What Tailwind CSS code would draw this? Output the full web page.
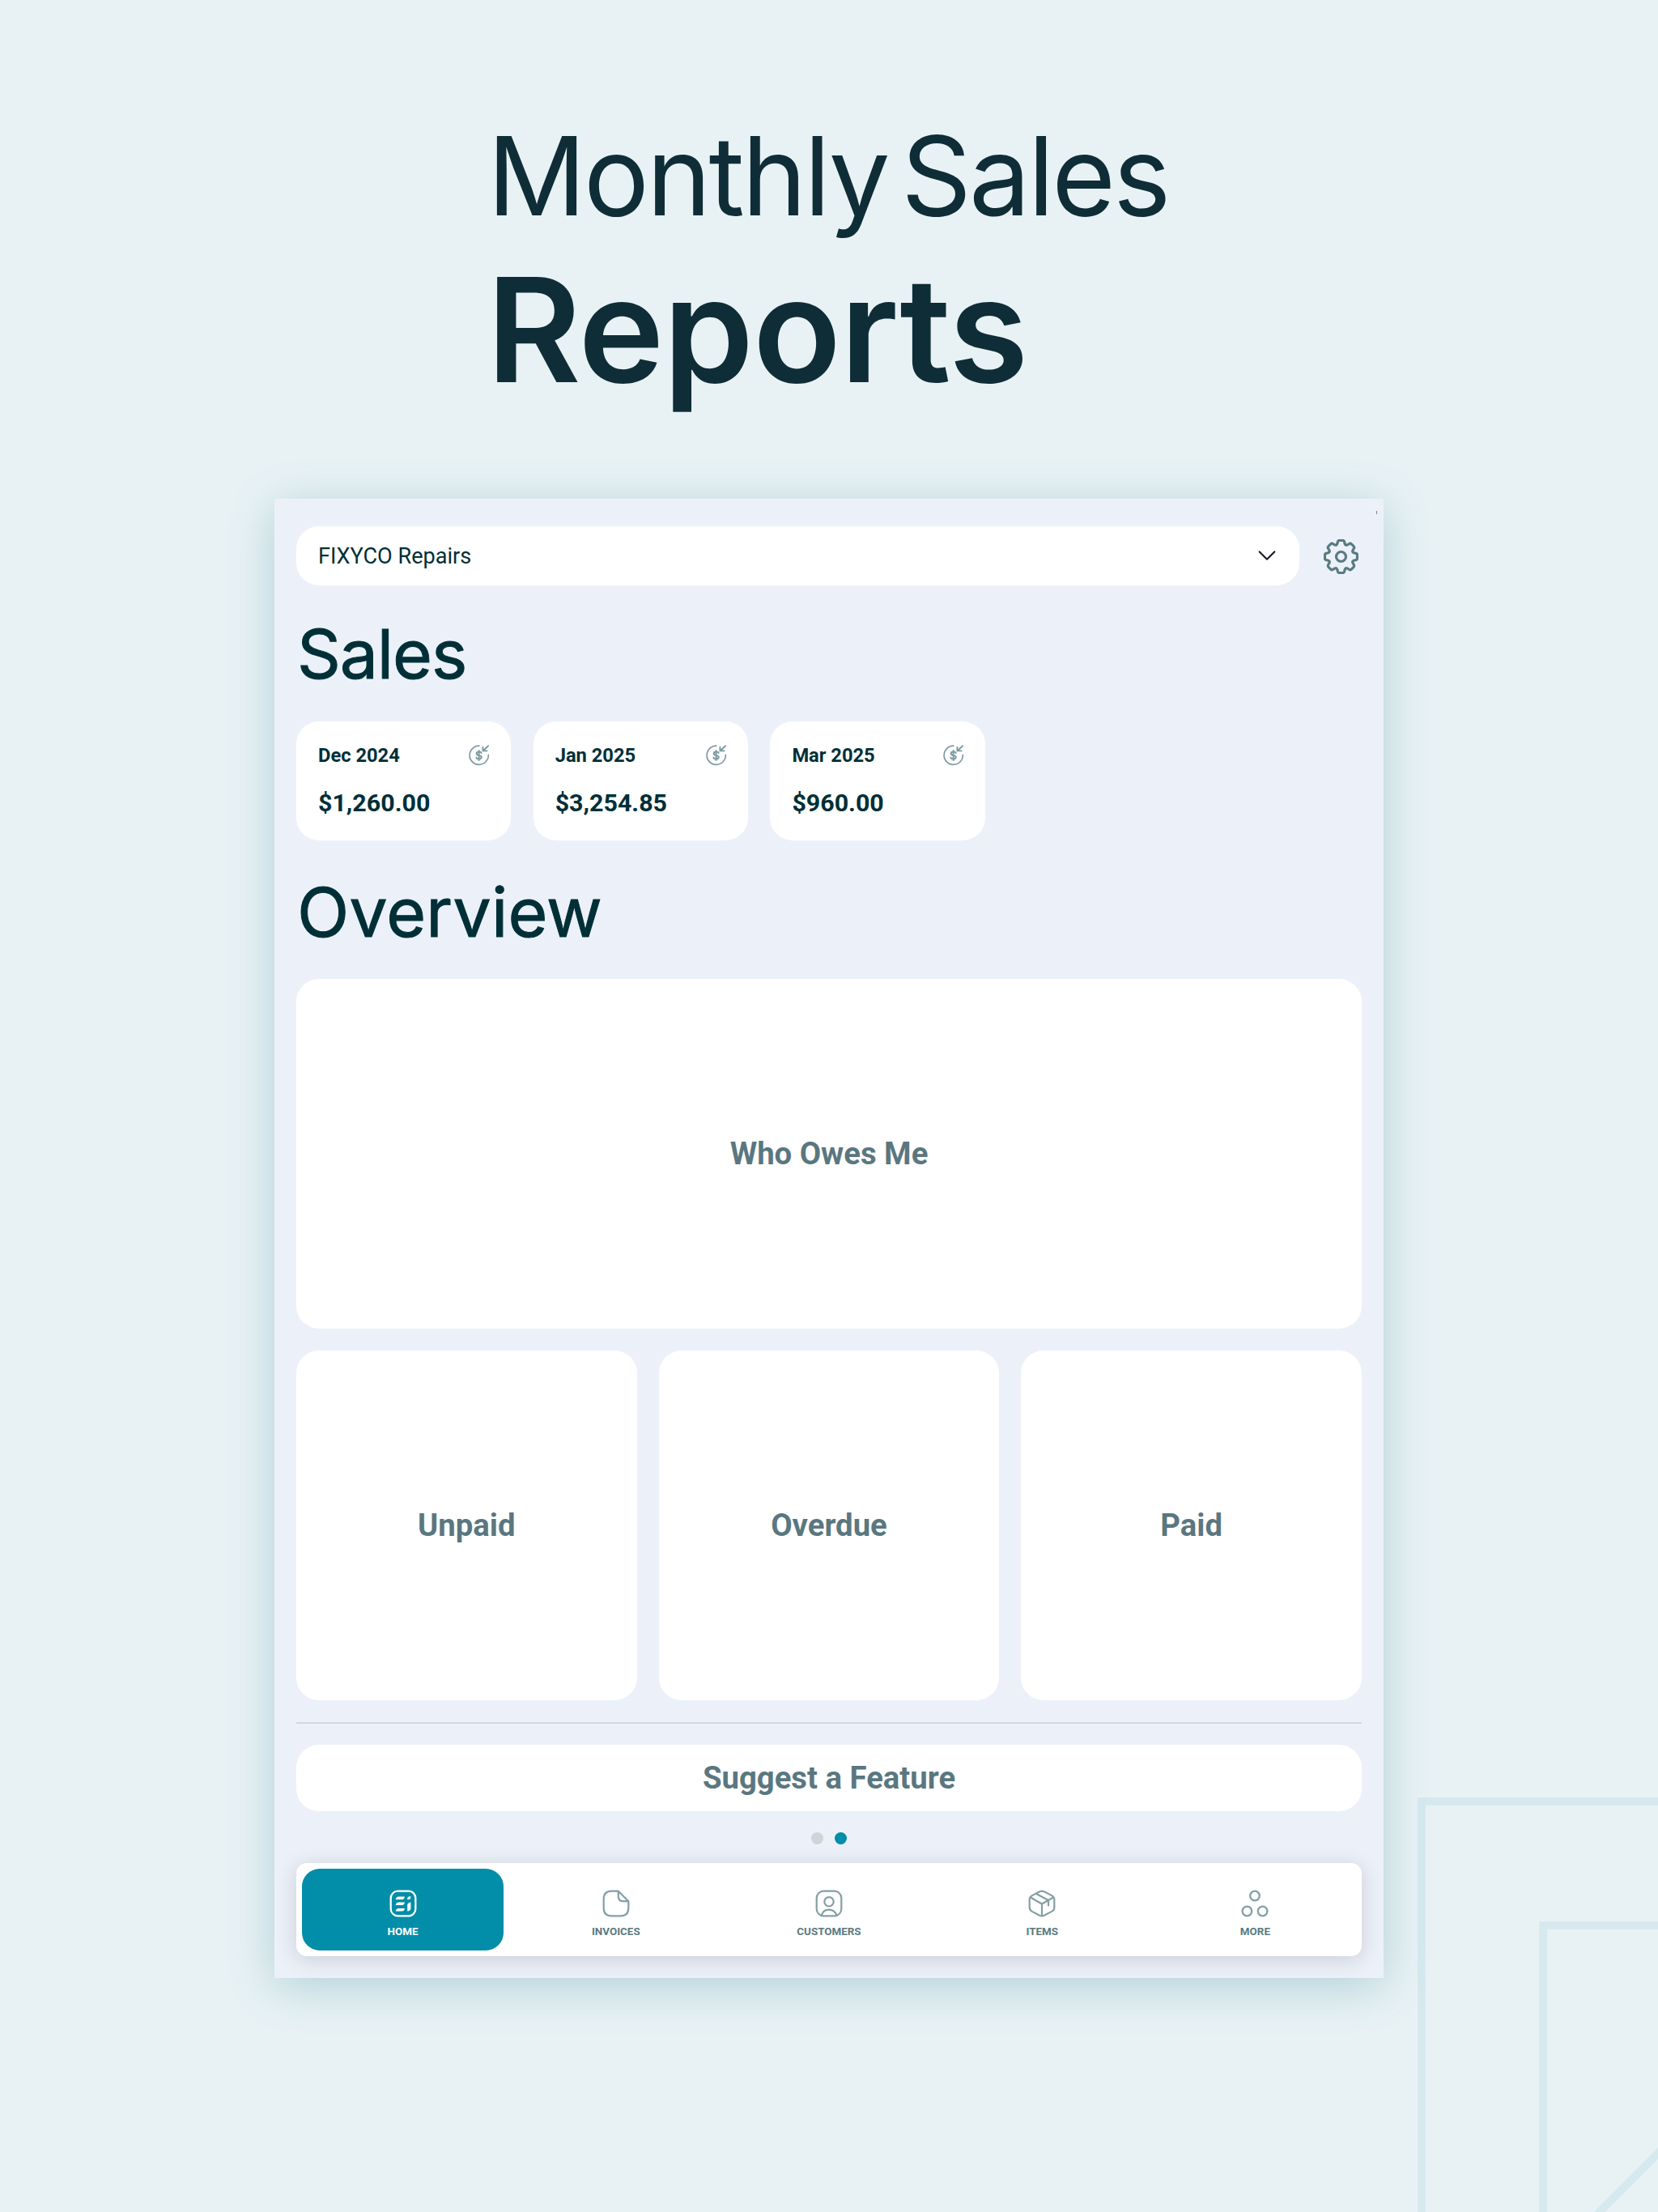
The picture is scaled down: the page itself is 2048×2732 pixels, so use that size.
<!DOCTYPE html>
<html lang="en">
<head>
<meta charset="utf-8">
<title>Monthly Sales Reports</title>
<script src="https://cdn.jsdelivr.net/npm/@tailwindcss/browser@4"></script>
</head>
<body class="relative h-[2732px] w-[2048px] overflow-hidden bg-[#e8f2f5] font-['Roboto',sans-serif] text-[#002f37]">

<svg width="0" height="0" class="absolute">
  <defs>
    <path id="tooth" d="M-6.1-14.400Q-4.800-15-4.500-16.400L-4.100-18.400Q-3.700-20-2.300-20H2.300Q3.700-20 4.100-18.400L4.500-16.400Q4.800-15 6.1-14.400"/>
    <g id="income" fill="none" stroke="#7f9aa1" stroke-width="1.7" stroke-linecap="round" stroke-linejoin="round">
      <path d="M12.8 1.2A11.6 11.6 0 1 0 24.3 12.4"/>
      <path d="M24 1.2L17.8 7.2M17.4 2.6V7.4H22.6" stroke-width="1.9"/>
      <path d="M15.6 10Q15.2 8.5 12.6 8.5Q9.7 8.5 9.7 10.7Q9.7 12.4 12.6 12.9Q15.8 13.4 15.8 15.3Q15.8 17.4 12.6 17.4Q9.8 17.4 9.4 15.6M12.6 6.9V19" stroke-width="2"/>
    </g>
  </defs>
</svg>

<!-- Background line art -->
<svg class="absolute right-0 bottom-0" width="298" height="513" viewBox="1750 2219 298 513" fill="none" stroke="#d6e9ef" stroke-width="9.8">
  <path d="M1756 2740V2224.9H2060M1906.200 2740V2377.900H2060M1965 2742.500L2060 2647.500"/>
</svg>

<div class="relative flex flex-col items-center pt-[137px]">
  <header class="w-[850px] text-[#0f2d37] font-['Inter',sans-serif]">
    <h1 class="ml-[3px] text-[135px] leading-[160px] font-normal tracking-[-3.060px] whitespace-nowrap [word-spacing:-18px]">Monthly Sales</h1>
    <h2 class="mt-[10px] ml-[2px] text-[179px] leading-[200px] font-semibold tracking-[-1px]">Reports</h2>
  </header>

  <main class="relative mt-[109px] h-[1827px] w-[1370px] bg-[#ecf1f9] px-[27px] pt-[34px] shadow-[0_10px_54px_rgba(0,104,125,0.235)]">
    <div class="absolute top-[15px] right-[8px] h-1 w-px bg-[#7c8587]"></div>

    <div class="flex items-center">
      <div class="flex h-[72.500px] w-[1239px] items-center justify-between rounded-[28px] bg-white pr-[28px] pl-[27px]">
        <span class="pt-[2px] text-[27.100px] leading-8">FIXYCO Repairs</span>
        <svg width="24" height="16" viewBox="0 0 24 16" fill="none" stroke="#1d1b24" stroke-width="2.200" stroke-linecap="round" stroke-linejoin="round"><path d="M2.700 3.500L12 12.700L21.300 3.500"/></svg>
      </div>
      <svg class="mt-[2px] ml-[30px]" width="43" height="43" viewBox="-21.500 -21.500 43 43" fill="none" stroke="#5a7a82" stroke-width="3.200" stroke-linejoin="round" stroke-linecap="round">
        <use href="#tooth"/><use href="#tooth" transform="rotate(45)"/><use href="#tooth" transform="rotate(90)"/><use href="#tooth" transform="rotate(135)"/><use href="#tooth" transform="rotate(180)"/><use href="#tooth" transform="rotate(225)"/><use href="#tooth" transform="rotate(270)"/><use href="#tooth" transform="rotate(315)"/>
        <circle r="6"/>
      </svg>
    </div>

    <h3 class="mt-[35.500px] pl-px text-[84px] leading-[100px] tracking-[-1.100px] [-webkit-text-stroke:1px_#002f37] font-['Inter',sans-serif]">Sales</h3>

    <section class="mt-[33px] flex gap-[27.500px]">
      <article class="h-[146.500px] w-[265.200px] rounded-[28px] bg-white px-[27px] pt-[26px]">
        <div class="flex h-[32px] items-center justify-between">
          <span class="text-[23.700px] leading-8 font-bold">Dec 2024</span>
          <svg class="-mr-px" width="26" height="26" viewBox="0 0 26 26"><use href="#income"/></svg>
        </div>
        <p class="mt-[23px] text-[30.400px] leading-[40px] font-bold">$1,260.00</p>
      </article>
      <article class="h-[146.500px] w-[265.200px] rounded-[28px] bg-white px-[27px] pt-[26px]">
        <div class="flex h-[32px] items-center justify-between">
          <span class="text-[23.700px] leading-8 font-bold">Jan 2025</span>
          <svg class="-mr-px" width="26" height="26" viewBox="0 0 26 26"><use href="#income"/></svg>
        </div>
        <p class="mt-[23px] text-[30.400px] leading-[40px] font-bold">$3,254.85</p>
      </article>
      <article class="h-[146.500px] w-[265.200px] rounded-[28px] bg-white px-[27px] pt-[26px]">
        <div class="flex h-[32px] items-center justify-between">
          <span class="text-[23.700px] leading-8 font-bold">Mar 2025</span>
          <svg class="-mr-px" width="26" height="26" viewBox="0 0 26 26"><use href="#income"/></svg>
        </div>
        <p class="mt-[23px] text-[30.400px] leading-[40px] font-bold">$960.00</p>
      </article>
    </section>

    <h3 class="mt-[39px] pl-px text-[84px] leading-[100px] tracking-[0.200px] [-webkit-text-stroke:1px_#002f37] font-['Inter',sans-serif]">Overview</h3>

    <section class="mt-[32.500px] grid grid-cols-3 gap-[27px] text-[38.300px] leading-[44px] font-bold text-[#5a7780]">
      <div class="col-span-3 flex h-[431.500px] items-center justify-center rounded-[28px] bg-white">Who Owes Me</div>
      <div class="flex h-[432px] items-center justify-center rounded-[28px] bg-white">Unpaid</div>
      <div class="flex h-[432px] items-center justify-center rounded-[28px] bg-white">Overdue</div>
      <div class="flex h-[432px] items-center justify-center rounded-[28px] bg-white">Paid</div>
    </section>

    <hr class="mt-[27.500px] h-[2px] border-0 bg-[#d2d8e3]">

    <div class="mt-[26px] flex h-[81.500px] items-center justify-center rounded-[28px] bg-white text-[38.300px] leading-[44px] font-bold text-[#5a7780]">Suggest a Feature</div>

    <div class="mt-[26px] flex justify-center gap-[13.200px]">
      <span class="size-[15.600px] rounded-full bg-[#d0d3d7]"></span>
      <span class="size-[15.600px] rounded-full bg-[#028da8]"></span>
    </div>

    <nav class="mt-[22.900px] grid h-[115px] grid-cols-5 rounded-[13px] bg-white text-[13.400px] leading-4 font-bold text-[#5a7a82] shadow-[0_4px_26px_rgba(0,0,0,0.15)]">
      <a class="mx-[7px] mt-[7px] mb-[7px] flex flex-col items-center rounded-[22px] bg-[#028da8] pt-[26px] text-white">
        <svg width="34" height="34" viewBox="0 0 34 34" fill="#fff">
          <rect x="1.700" y="1.700" width="30.600" height="30.600" rx="8.500" fill="none" stroke="#fff" stroke-width="2.300"/>
          <path d="M10.800 8.500H19Q18.300 12 15.500 12H7.500Q8.500 8.800 10.800 8.500ZM10.800 15.600H19Q18.300 19.100 15.500 19.100H7.500Q8.500 15.900 10.800 15.600ZM10.800 23H19Q18.300 26.500 15.500 26.500H7.500Q8.500 23.300 10.800 23ZM26.400 8.300V10Q25.800 12 24 12H22.200V10.300Q23.200 8.400 24.600 8.300ZM26.400 15.600V23.500Q25.600 26.300 22.200 26.600V18.500Q22.800 15.900 26.400 15.600Z"/>
        </svg>
        <span class="mt-[10.500px]">HOME</span>
      </a>
      <a class="flex flex-col items-center pt-[33px]">
        <svg width="34" height="34" viewBox="0 0 34 34" fill="none" stroke="#849fa5" stroke-width="2.200" stroke-linejoin="round"><path d="M19.800 1.700H11.500Q1.700 1.700 1.700 11.500V22.500Q1.700 32.300 11.500 32.300H22.500Q32.300 32.300 32.300 22.500V14.200ZM19.800 1.700V8.200Q19.800 14.200 25.800 14.200H32.300"/></svg>
        <span class="mt-[10.500px]">INVOICES</span>
      </a>
      <a class="flex flex-col items-center pt-[33px]">
        <svg width="34" height="34" viewBox="0 0 34 34" fill="none" stroke="#849fa5" stroke-width="2.200"><rect x="1.700" y="1.700" width="30.600" height="30.600" rx="8.500"/><circle cx="17" cy="14.800" r="5.700"/><path d="M7.600 31.500Q10 24.600 17 24.600T26.400 31.500"/></svg>
        <span class="mt-[10.500px]">CUSTOMERS</span>
      </a>
      <a class="flex flex-col items-center pt-[33px]">
        <svg width="34" height="34" viewBox="0 0 34 34" fill="none" stroke="#849fa5" stroke-width="2.200" stroke-linejoin="round" stroke-linecap="round"><path d="M14.200 2.300Q17 1 19.800 2.300L29.500 7.400Q32.300 9.200 32.300 12V22Q32.300 25 29.500 26.600L19.800 31.700Q17 33 14.200 31.700L4.500 26.600Q1.700 25 1.700 22V12Q1.700 9.200 4.500 7.400ZM3 9.500L17 17.500L31 9.500M17 17.500V32M10.500 5.200L25 13V19.500"/></svg>
        <span class="mt-[10.500px]">ITEMS</span>
      </a>
      <a class="flex flex-col items-center pt-[33px]">
        <svg width="34" height="34" viewBox="0 0 34 34" fill="none" stroke="#849fa5" stroke-width="2.300"><circle cx="17" cy="7.500" r="5.800"/><circle cx="7.400" cy="26.500" r="5.800"/><circle cx="26.600" cy="26.500" r="5.800"/></svg>
        <span class="mt-[10.500px]">MORE</span>
      </a>
    </nav>
  </main>
</div>
</body>
</html>
